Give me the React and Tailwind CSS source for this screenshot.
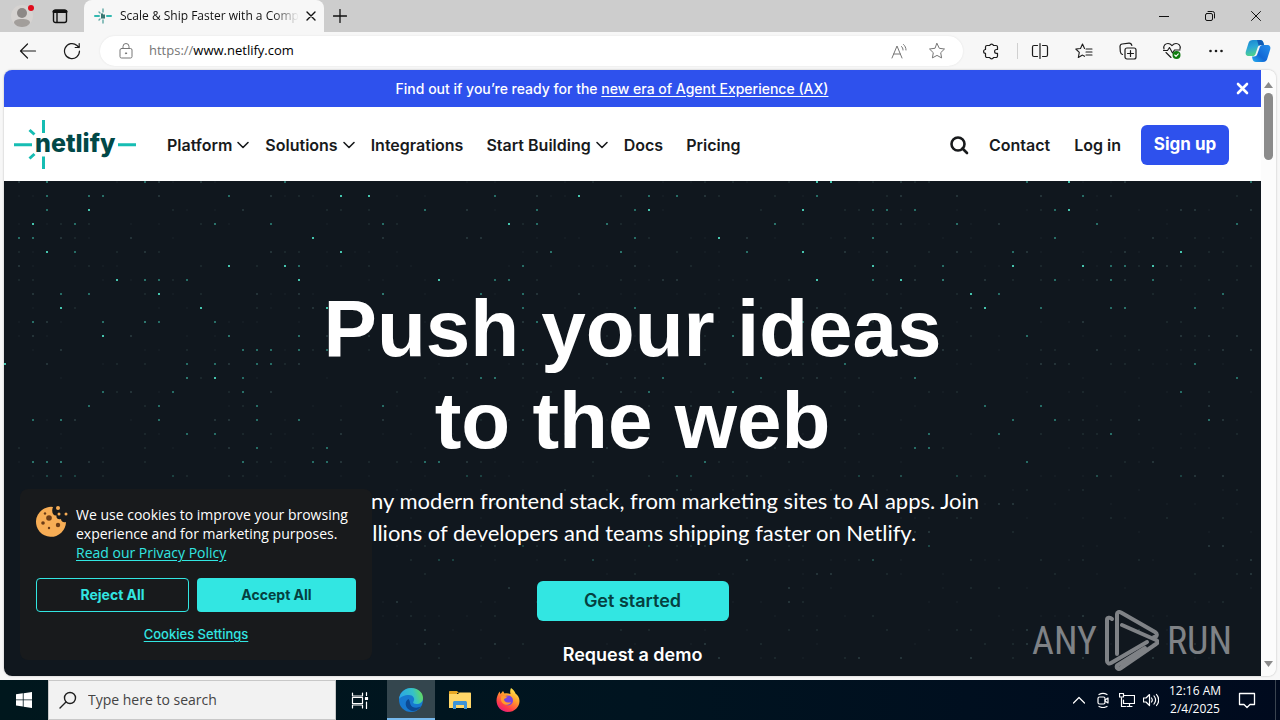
import { useState } from "react";

// lit dots of the hero grid: one list of columns per row
const BRIGHT = [
  [57, 58, 75],
  [23, 25, 40],
  [5, 45, 56, 75],
  [1, 35],
  [21, 50],
  [2, 23, 56, 83],
  [15, 19, 61, 71, 76, 81],
  [7, 20, 30, 57, 63],
  [10, 68],
  [3, 13, 22, 69],
  [],
  [6],
  [],
  [-1],
  [14],
];
const MEDIUM = [
  [2, 9, 19, 72, 88],
  [2, 5, 6, 15, 34, 45, 47, 57, 76],
  [2, 29, 37, 44, 61, 62, 64, 74],
  [4, 14, 18, 26, 37, 42, 54, 67, 77, 87],
  [0, 1, 44, 61, 74],
  [4, 38, 43, 52, 71],
  [20, 36, 66, 78, 79],
  [9, 10, 12, 34, 35, 61, 66, 74, 78, 81],
  [3, 5, 26, 33, 36, 70, 86],
  [36, 44, 73, 78, 79, 84],
  [1, 6, 9, 10, 14, 37, 56],
  [15, 20, 26, 51, 72],
  [16, 17, 18, 20, 22, 36],
  [12, 14, 17, 18, 59, 84],
  [12, 16, 33, 34, 46, 53, 64, 87],
  [6, 11, 16, 45, 51, 83],
  [5, 10, 17, 26, 69, 73],
  [1, 3, 10, 17, 20, 71, 74, 85],
  [12, 14, 65, 70, 78],
  [17, 22, 64, 65],
  [1, 2, 3, 16, 21, 22, 29, 30, 49, 72],
  [2, 3, 4, 11, 32, 33, 47, 48, 60, 63, 67, 77, 83],
  [],
  [34, 59, 63],
  [],
  [43, 48, 56],
  [36, 45, 65],
  [30, 31, 41, 61],
];

const FAINT = [];
for (let r = 0; r < 35; r++) {
  for (let c = 0; c < 90; c++) {
    const n = Math.abs(Math.sin(c * 12.9898 + r * 78.233) * 43758.5453) % 1;
    if (n < 0.3) FAINT.push([c, r, n < 0.05 ? 0.22 : n < 0.14 ? 0.12 : 0.05]);
  }
}

function HeroDots() {
  return (
    <svg className="absolute inset-0 h-full w-full" aria-hidden="true">
      {FAINT.map(([c, r, o]) => (
        <rect key={c + "-" + r} x={14 + 14 * c} y={14 * r} width="2" height="2" fill="#6f9a97" opacity={o} />
      ))}
      {MEDIUM.map((cols, r) =>
        cols.map((c) => (
          <rect key={c + "-" + r} x={14 + 14 * c} y={14 * r} width="2" height="2" fill="#35a594" opacity={r > 20 ? 0.3 : 0.6} />
        ))
      )}
      {BRIGHT.map((cols, r) =>
        cols.map((c) => (
          <rect key={c + "-" + r} x={14 + 14 * c} y={14 * r} width="2" height="2" fill="#45c4ae" />
        ))
      )}
    </svg>
  );
}

function Icon({ size = 20, stroke = 1, children, className = "" }) {
  return (
    <svg
      width={size}
      height={size}
      viewBox={`0 0 ${size} ${size}`}
      fill="none"
      stroke="currentColor"
      strokeWidth={stroke}
      strokeLinecap="round"
      strokeLinejoin="round"
      className={"shrink-0 " + className}
      aria-hidden="true"
    >
      {children}
    </svg>
  );
}

function IconButton({ label, className = "", children }) {
  return (
    <button type="button" aria-label={label} className={"flex shrink-0 items-center justify-center " + className}>
      {children}
    </button>
  );
}

function TabBar() {
  return (
    <header className="flex h-8 shrink-0 items-stretch bg-[#cdcdcd] text-[#111]">
      <IconButton label="Profile" className="w-11">
        <Icon size={24}>
          <circle cx="12" cy="12" r="11" fill="#d6d3d1" stroke="none" />
          <circle cx="12" cy="9" r="5" fill="#8c8886" stroke="none" />
          <path d="M4 19c0-3 3-4 8-4s8 1 8 4c-2 3-5 4-8 4s-6-1-8-4z" fill="#a29e9b" stroke="none" />
          <circle cx="21" cy="4" r="3" fill="#e00b1c" stroke="none" />
        </Icon>
      </IconButton>
      <IconButton label="Tab actions" className="w-8">
        <Icon size={16} stroke={1.4}>
          <rect x="1.500" y="2" width="13" height="12.500" rx="2" />
          <path d="M2 3.500h12" strokeWidth="3" />
          <path d="M5 5v9" />
        </Icon>
      </IconButton>
      <div className="ml-2 flex w-60 items-center rounded-t-lg bg-[#f7f7f7] pl-2.5 pr-2">
        <Icon size={18} stroke={2} className="text-[#32b8b0]">
          <path d="M1 9h4M13 9h4" />
          <path d="M9 2v3M9 13v3M5 5l1 1M5 13l1-1" strokeWidth="1.400" stroke="#5fa8a4" />
          <path d="M8 7v4M10 8v3" stroke="#0b5650" strokeWidth="1.600" />
        </Icon>
        <button type="button" className="ml-2 flex-1 whitespace-nowrap text-left text-xs mask-r-from-85%">
          Scale &amp; Ship Faster with a Comp
        </button>
        <IconButton label="Close tab" className="ml-1 h-4 w-4">
          <Icon size={10} stroke={1.4}>
            <path d="M1 1l8 8M9 1l-8 8" />
          </Icon>
        </IconButton>
      </div>
      <IconButton label="New tab" className="w-8">
        <Icon size={14} stroke={1.3}>
          <path d="M7 .5v13M.5 7h13" />
        </Icon>
      </IconButton>
      <div className="ml-auto flex">
        <IconButton label="Minimize" className="w-12">
          <Icon size={10}>
            <path d="M0 5.500h10" />
          </Icon>
        </IconButton>
        <IconButton label="Restore" className="w-11">
          <Icon size={10}>
            <rect x=".5" y="2.500" width="7" height="7" rx="1.500" />
            <path d="M3 .5h4.500a2 2 0 0 1 2 2V7" />
          </Icon>
        </IconButton>
        <IconButton label="Close window" className="w-12">
          <Icon size={10}>
            <path d="M.5.5l9 9M9.500.5l-9 9" />
          </Icon>
        </IconButton>
      </div>
    </header>
  );
}

const STAR = "M10 2.500l2.300 4.800 5.200.7-3.800 3.700.9 5.200-4.600-2.500-4.600 2.500.9-5.200L2.500 8l5.200-.7z";

function Toolbar() {
  return (
    <div className="flex h-[38px] shrink-0 items-center bg-[#f7f7f7] pl-1.5 text-[#1b1b1b]">
      <IconButton label="Back" className="w-11">
        <Icon size={18} stroke={1.2}>
          <path d="M16.500 9H1.500M8.500 2L1.500 9l7 7" />
        </Icon>
      </IconButton>
      <IconButton label="Refresh" className="w-11">
        <Icon size={18} stroke={1.2}>
          <path d="M16.500 9a7.500 7.500 0 1 1-2.500-5.500L16 5.500M16.200 1.500v4h-4" />
        </Icon>
      </IconButton>
      <div className="ml-1.5 flex h-[30px] flex-1 items-center rounded-full bg-white pl-4 pr-4 text-[#767676] shadow-[0_0_2px_#e0e0e0]">
        <Icon size={20}>
          <rect x="4" y="7.500" width="12" height="9.500" rx="1.500" />
          <path d="M7 7.500V5.500a3 3 0 0 1 6 0v2" />
          <circle cx="10" cy="12.300" r=".6" fill="currentColor" />
        </Icon>
        <label htmlFor="address" className="ml-[13px] text-[13px]">
          https://
        </label>
        <input
          id="address"
          defaultValue="www.netlify.com"
          className="min-w-0 flex-1 bg-transparent text-[13px] text-black outline-none"
        />
        <IconButton label="Read aloud" className="w-8">
          <Icon size={18}>
            <path d="M2 16L7 4l5 12M3.700 12h6.600M11.500 4.500c1 .8 1.500 2 1.500 3.500M13.500 2.500c1.500 1.300 2.500 3.200 2.500 5.500" />
          </Icon>
        </IconButton>
        <IconButton label="Add to favorites" className="ml-3 w-5">
          <Icon size={20}>
            <path d={STAR} />
          </Icon>
        </IconButton>
      </div>
      <div className="ml-1.5 flex items-center">
        <IconButton label="Extensions" className="w-12 pr-1">
          <Icon size={18} stroke={1.2}>
            <path d="M5 3.500h2.700a2 2 0 0 1 3.800 0H14a1.500 1.500 0 0 1 1.500 1.500v2.500h-1a1.900 1.900 0 0 0 0 3.800h1V14a1.500 1.500 0 0 1-1.500 1.500h-2.500a2 2 0 0 1-3.800 0H5A1.500 1.500 0 0 1 3.500 14v-2.700a1.900 1.900 0 0 1 0-3.800V5A1.500 1.500 0 0 1 5 3.500z" />
          </Icon>
        </IconButton>
        <span className="h-4 w-px bg-[#d0d0d0]" />
        <IconButton label="Split screen" className="w-11">
          <Icon size={18} stroke={1.2}>
            <path d="M6.500 3.500H3A1.500 1.500 0 0 0 1.500 5v8A1.500 1.500 0 0 0 3 14.500h3.500M9 1.500v15M11.500 3.500H15A1.500 1.500 0 0 1 16.500 5v8a1.500 1.500 0 0 1-1.500 1.500h-3.500" />
          </Icon>
        </IconButton>
        <IconButton label="Favorites" className="w-11">
          <Icon size={18} stroke={1.1}>
            <path d="M9.500 6.500L7.500 2 5.500 6.500.8 7l3.500 3.400-1 5.100 4.200-2.400 2 1.200M11 7h6M11 10h6M11 13h6" />
          </Icon>
        </IconButton>
        <IconButton label="Collections" className="w-11">
          <Icon size={18} stroke={1.2}>
            <rect x="6" y="6" width="11" height="11" rx="2" />
            <path d="M11.500 8.500v6M8.500 11.500h6M3.500 12.500C2 12 1.500 11 1.300 9.500L1 4.500C1 3 2 2.200 3.200 2L10 1.200c1.500-.1 2.500.8 2.800 2.300" />
          </Icon>
        </IconButton>
        <IconButton label="Browser essentials" className="w-11">
          <Icon size={20} stroke={1.1}>
            <path d="M2 8C1 4.500 3.500 2.500 6 2.500c2 0 3 1 4 2.200 1-1.200 2-2.200 4-2.200 2.500 0 5 2 4 5.500M4 11.500l5 5M1.500 9.500h4l2-3 3 5.500 2-3h5.500" />
            <circle cx="14.500" cy="14" r="4" fill="#107c10" stroke="none" />
            <path d="M12.700 14l1.300 1.300 2.300-2.500" stroke="#fff" />
          </Icon>
        </IconButton>
        <IconButton label="Settings and more" className="w-11">
          <Icon size={16}>
            <g fill="currentColor" stroke="none">
              <circle cx="2.500" cy="8" r="1.300" />
              <circle cx="8" cy="8" r="1.300" />
              <circle cx="13.500" cy="8" r="1.300" />
            </g>
          </Icon>
        </IconButton>
        <IconButton label="Copilot" className="mr-2 ml-1.5 w-7">
          <svg width="26" height="24" viewBox="0 0 26 24" aria-hidden="true">
            <defs>
              <linearGradient id="cpA" x1="0" y1="0" x2="0.300" y2="1">
                <stop offset="0" stopColor="#1684ce" />
                <stop offset="0.500" stopColor="#2ba7d8" />
                <stop offset="1" stopColor="#4fd38b" />
              </linearGradient>
              <linearGradient id="cpB" x1="1" y1="0" x2="0" y2="1">
                <stop offset="0" stopColor="#2590ec" />
                <stop offset="0.600" stopColor="#1267d6" />
                <stop offset="1" stopColor="#27b2f0" />
              </linearGradient>
            </defs>
            <path d="M8 1h7c2 0 3 1 3.500 3l.5 2h-3c-2 0-3 1-3.500 3l-2 6c-.5 1.500-1.500 2-3 2H4c-3 0-4-2-3-5l2.500-8C4 2 5.500 1 8 1z" fill="url(#cpA)" />
            <path d="M18 23h-7c-2 0-3-1-3.500-3L7 17.500h2c2 0 3-1 3.500-3l2-5.500c.5-2 1.500-3 3-3H22c3 0 4 2 3 5l-2.500 8c-.5 2.500-2 4-4.500 4z" fill="url(#cpB)" />
            <path d="M15 1c2 0 3 1 3.500 3l.5 2h-3c-1 0-1.700.2-2.300.7L12 1z" fill="#0f5bb5" />
          </svg>
        </IconButton>
      </div>
    </div>
  );
}

function NetlifyLogo() {
  return (
    <a href="#home" aria-label="Netlify home" className="shrink-0">
      <svg width="122" height="50" viewBox="0 0 122 50" className="text-[#014847]">
        <g stroke="#16bdb3" strokeWidth="3" fill="none">
          <path d="M29.500 0v13M29.500 36.500V49M0 24.700h18M104 24.700h18" />
          <path d="M15.500 10l5 4.500M15.500 38.500l5-4.500" />
        </g>
        <text x="21" y="32" fill="currentColor" className="font-['Inter',sans-serif] text-[25px] font-extrabold">
          netlify
        </text>
      </svg>
    </a>
  );
}

const MENU = [
  { label: "Platform", menu: true },
  { label: "Solutions", menu: true },
  { label: "Integrations" },
  { label: "Start Building", menu: true },
  { label: "Docs" },
  { label: "Pricing" },
];

function SiteNav() {
  return (
    <nav className="flex h-[74px] shrink-0 items-center bg-white pt-0.5 pl-2.5 pr-8 text-base font-semibold text-[#181a1c]">
      <NetlifyLogo />
      <ul className="ml-[31px] flex items-center gap-[15px] whitespace-nowrap">
        {MENU.map((item) =>
          item.menu ? (
            <li key={item.label}>
              <button type="button" className="flex items-center gap-1">
                {item.label}
                <Icon size={14} stroke={1.6}>
                  <path d="M2 4.500l5 5 5-5" />
                </Icon>
              </button>
            </li>
          ) : (
            <li key={item.label} className="mr-2">
              <a href="#menu">{item.label}</a>
            </li>
          )
        )}
      </ul>
      <div className="ml-auto flex items-center whitespace-nowrap">
        <IconButton label="Search">
          <Icon size={20} stroke={2.6}>
            <circle cx="9" cy="9" r="6.500" />
            <path d="M13.500 13.500l4.500 4.500" />
          </Icon>
        </IconButton>
        <a href="#contact" className="ml-5">
          Contact
        </a>
        <a href="#login" className="ml-6">
          Log in
        </a>
        <a
          href="#signup"
          className="ml-5 flex h-10 w-22 items-center justify-center rounded-md bg-[#2e51ed] text-[17px] font-bold text-white"
        >
          Sign up
        </a>
      </div>
    </nav>
  );
}

function Watermark() {
  return (
    <div className="absolute right-[29px] bottom-1 flex items-center gap-2 font-['Roboto_Condensed','Liberation_Sans_Narrow',sans-serif] text-[38px] leading-none text-[#7f8286]">
      <span>ANY</span>
      <svg width="54" height="62" viewBox="0 0 54 62" fill="none" stroke="currentColor" strokeWidth="4" strokeLinejoin="round" strokeLinecap="round" aria-hidden="true">
        <path d="M7 9C5 7 2 7.500 2 10v41c0 2 2 3 4 2l36-21" />
        <path d="M12 44V4c0-2 2-2.500 4-1.500L50 22c3 2 2 5-1 5" />
        <path d="M17 15l34 15c2 1 2 3 0 4L16 58c-3 2-5 0-4-2.500L40 38" />
      </svg>
      <span>RUN</span>
    </div>
  );
}

function CookieCard({ onClose }) {
  return (
    <aside className="absolute bottom-4 left-4 w-[352px] rounded-lg bg-[#181a1c] p-4 text-sm text-white">
      <div className="flex gap-2">
        <svg width="32" height="32" viewBox="0 0 32 32" className="shrink-0" aria-hidden="true">
          <path d="M17 2a15 15 0 1 0 13 15c-3 1-5-1-5-3-3 1-5-1-4.500-3.500C17 11 15 7 17 2z" fill="#f7ad55" />
          <g fill="#6b3c17">
            <circle cx="13" cy="13" r="2.800" />
            <circle cx="7" cy="18" r="1.800" />
            <circle cx="22" cy="20" r="2.200" />
            <circle cx="9" cy="8.500" r="1.200" />
            <circle cx="13" cy="23" r="1.200" />
          </g>
          <g fill="#f7ad55">
            <circle cx="22" cy="3" r="2" />
            <circle cx="23" cy="9" r="1.500" />
            <circle cx="30" cy="9" r="1.500" />
          </g>
        </svg>
        <p className="font-['Open_Sans',sans-serif] leading-[19px]">
          We use cookies to improve your browsing
          <br />
          experience and for marketing purposes.
          <br />
          <a href="#privacy" className="text-[#32e6e2] underline underline-offset-2">
            Read our Privacy Policy
          </a>
        </p>
      </div>
      <div className="mt-4 grid grid-cols-[153fr_159fr] gap-2 font-bold">
        <button type="button" onClick={onClose} className="h-[34px] rounded-sm border border-[#32e6e2] text-[#32e6e2]">
          Reject All
        </button>
        <button type="button" onClick={onClose} className="h-[34px] rounded-sm bg-[#32e6e2] text-[#05403f]">
          Accept All
        </button>
      </div>
      <button
        type="button"
        className="mx-auto mt-3 block text-[13px] font-medium leading-5 text-[#32e6e2] underline underline-offset-2"
      >
        Cookies Settings
      </button>
    </aside>
  );
}

function Page() {
  const [cookies, setCookies] = useState(true);
  return (
    <main className="relative flex min-h-0 min-w-0 flex-1 flex-col font-['Inter',sans-serif]">
      <div className="flex h-[37px] shrink-0 items-center bg-[#2e51ed] pr-3 text-white">
        <p className="flex-1 pr-4 text-center text-sm font-medium">
          Find out if you’re ready for the{" "}
          <a href="#ax" className="underline underline-offset-2">
            new era of Agent Experience (AX)
          </a>
        </p>
        <IconButton label="Dismiss">
          <Icon size={13} stroke={2.6}>
            <path d="M2 2l9 9M11 2l-9 9" />
          </Icon>
        </IconButton>
      </div>
      <SiteNav />
      <section className="relative min-h-0 flex-1 overflow-hidden bg-[#10171e] text-white">
        <HeroDots />
        <div className="relative flex flex-col items-center pt-[102px] text-center">
          <h1 className="font-['Liberation_Sans',sans-serif] text-[80px] font-bold leading-[92px]">
            Push your ideas
            <br />
            to the web
          </h1>
          <p className="mt-[18px] font-['Lato',sans-serif] text-[22px] leading-8">
            Deploy any modern frontend stack, from marketing sites to AI apps. Join
            <br />
            millions of developers and teams shipping faster on Netlify.
          </p>
          <a
            href="#start"
            className="mt-8 flex h-10 w-48 items-center justify-center rounded-md bg-[#32e6e2] text-lg font-semibold text-[#05403f]"
          >
            Get started
          </a>
          <a href="#demo" className="mt-[22px] text-lg font-semibold leading-6">
            Request a demo
          </a>
        </div>
        <Watermark />
      </section>
      {cookies && <CookieCard onClose={() => setCookies(false)} />}
    </main>
  );
}

function Scrollbar() {
  return (
    <div className="flex w-[15px] shrink-0 flex-col items-center bg-[#fcfcfc] py-2 text-[#8b8b8b]" aria-hidden="true">
      <svg width="9" height="7" viewBox="0 0 9 7" className="mt-1 shrink-0">
        <path d="M0 6L4.500 0 9 6z" fill="currentColor" />
      </svg>
      <span className="mt-1 h-[67px] w-[9px] rounded-full bg-[#8b8b8b]" />
      <svg width="9" height="7" viewBox="0 0 9 7" className="mt-auto shrink-0">
        <path d="M0 0l4.500 6L9 0z" fill="currentColor" />
      </svg>
    </div>
  );
}

function Taskbar() {
  return (
    <footer className="flex h-10 shrink-0 items-stretch bg-linear-to-r from-[#00171d] via-[#001420] to-[#000a1e] text-white">
      <IconButton label="Start" className="w-12">
        <svg width="16" height="16" viewBox="0 0 16 16" fill="#fff" aria-hidden="true">
          <path d="M0 2.200L6.800 1.300v6.200H0zM7.600 1.200L16 0v7.500H7.600zM0 8.300h6.800v6.200L0 13.600zM7.600 8.300H16V16l-8.400-1.200z" />
        </svg>
      </IconButton>
      <div className="flex w-72 items-center border border-[#c8c8c8] bg-[#f2f2f2] pl-2.5 text-[#1f1f1f]">
        <Icon size={18} stroke={1.4}>
          <circle cx="11" cy="7" r="5.500" />
          <path d="M7 11l-6 6" />
        </Icon>
        <input
          aria-label="Type here to search"
          placeholder="Type here to search"
          className="ml-[11px] min-w-0 flex-1 bg-transparent text-sm outline-none placeholder:text-[#444]"
        />
      </div>
      <IconButton label="Task view" className="w-[51px] pr-1">
        <Icon size={18} stroke={1.2}>
          <path d="M1.500 2v3h10V2M1.500 17v-3h10v3M1.500 6.500h10v6h-10zM15.500 1.500v3M15.500 11v6.500" />
          <rect x="14.500" y="6.500" width="2" height="2" fill="currentColor" />
        </Icon>
      </IconButton>
      <IconButton label="Microsoft Edge" className="w-12 border-b-2 border-[#76b9ed] bg-[#34464e] pt-0.5">
        <svg width="26" height="26" viewBox="0 0 26 26" aria-hidden="true">
          <defs>
            <linearGradient id="edA" x1="0" y1="0.500" x2="1" y2="0.300">
              <stop offset="0" stopColor="#2aa5e6" />
              <stop offset="0.600" stopColor="#35c1c8" />
              <stop offset="1" stopColor="#67dd55" />
            </linearGradient>
          </defs>
          <circle cx="13" cy="13" r="12" fill="#1779d0" />
          <path d="M1 12C2 5 7 1 13 1c7 0 12 4.500 12 10 0 4-3 6-6.500 6-3 0-4-1-3-2.500 2-3-.5-6.500-4.500-6.500-4.500 0-8.500 2-10 4z" fill="url(#edA)" />
          <path d="M10.500 12c-4 2-4 9 2 11.500 4 1.500 8-.5 10.500-4-4 2-9 1.500-10.500-2-.8-2-.5-4-2-5.500z" fill="#0c4a94" />
        </svg>
      </IconButton>
      <IconButton label="File Explorer" className="w-[49px]">
        <svg width="22" height="20" viewBox="0 0 22 20" aria-hidden="true">
          <path d="M0 2c0-.6.400-1 1-1h7l2 2h-2v3H0z" fill="#e8a824" />
          <path d="M0 4h9l1.500-1.500H21c.6 0 1 .4 1 1V18H0z" fill="#ffd668" />
          <path d="M4 19v-6c0-1.500.5-2 2-2h10c1.500 0 2 .5 2 2v6h-3v-4H7v4z" fill="#3d93d8" />
        </svg>
      </IconButton>
      <IconButton label="Firefox" className="w-12">
        <svg width="24" height="24" viewBox="0 0 24 24" aria-hidden="true">
          <defs>
            <linearGradient id="ffA" x1="0.800" y1="0" x2="0.200" y2="1">
              <stop offset="0" stopColor="#fff14f" />
              <stop offset="0.400" stopColor="#ff9a2c" />
              <stop offset="0.750" stopColor="#ff3c48" />
              <stop offset="1" stopColor="#e3158a" />
            </linearGradient>
          </defs>
          <path d="M15 0c3 2 4 4 4.500 5.500C22 7 23.500 10 23.500 13c0 6-5 11-11.500 11S.5 19 .5 12.500C.5 9 2 6 3.500 3.500L4.500 6 7 3l1.500 2.500C11 5 13 5.500 14.500 6 14 4 14 2 15 0z" fill="url(#ffA)" />
          <circle cx="12" cy="12.500" r="5" fill="#7543e0" />
          <path d="M5.500 8C8 7 9 8.500 12 8.500c-2 1-2 2-4 2.500 0 3 3 4.500 7 3-1 3-6 4-8.500 1S5 10 5.500 8z" fill="#ff9a2c" />
        </svg>
      </IconButton>
      <div className="ml-auto flex items-center">
        <IconButton label="Show hidden icons" className="w-6">
          <Icon size={12} stroke={1.2}>
            <path d="M.5 9L6 3.500 11.500 9" />
          </Icon>
        </IconButton>
        <IconButton label="Meet now" className="w-6">
          <Icon size={16} stroke={1.2}>
            <rect x="3" y="5" width="7" height="7" rx="1.500" />
            <path d="M10 8l3-2v5l-3-2M4 2.500c2.500-1.500 5.500-1.500 8 0M4 14.500c2.500 1.300 5.500 1.300 8 0" />
          </Icon>
        </IconButton>
        <IconButton label="Network" className="w-6">
          <Icon size={16} stroke={1.2}>
            <path d="M5 3.500h10.500v8H4.500V8M8 14.500h5M10.500 11.500v3M2.500 6v8.500h4M.5 1.500h4V5h-4z" />
          </Icon>
        </IconButton>
        <IconButton label="Volume" className="w-6">
          <Icon size={16} stroke={1.2}>
            <path d="M.5 6v4H3l3.500 3.500v-11L3 6zM8.500 6c1 1.300 1 2.700 0 4M11 4c2 2.500 2 5.500 0 8M13.500 2.500c2.800 3.500 2.800 7.500 0 11" />
          </Icon>
        </IconButton>
        <time className="w-16 text-center text-xs leading-[18px]">
          12:16 AM
          <br />
          2/4/2025
        </time>
        <IconButton label="Notifications" className="w-10">
          <Icon size={18} stroke={1.3}>
            <path d="M1.500 2.500h15v11H12L9 16.500l-3-3H1.500z" />
          </Icon>
        </IconButton>
        <span className="ml-2 mr-1 h-10 w-px bg-[#3a4450]" />
      </div>
    </footer>
  );
}

export default function App() {
  return (
    <div className="flex h-screen flex-col overflow-hidden bg-[#f7f7f7] font-['Open_Sans','Noto_Sans',sans-serif]">
      <TabBar />
      <Toolbar />
      <div className="mx-1 mb-1 flex min-h-0 flex-1 overflow-hidden rounded-lg shadow-[0_0_2px_#b0b0b0]">
        <Page />
        <Scrollbar />
      </div>
      <Taskbar />
    </div>
  );
}
